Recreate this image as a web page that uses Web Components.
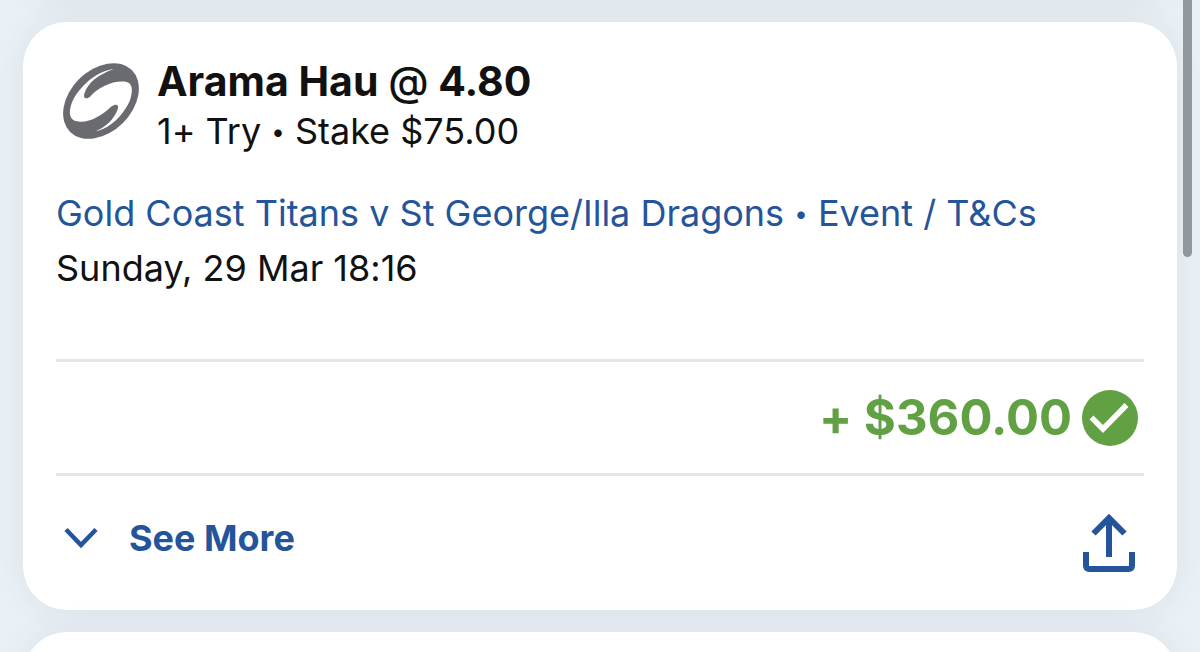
<!DOCTYPE html>
<html lang="en">
<head>
<meta charset="utf-8">
<meta name="viewport" content="width=device-width, initial-scale=1">
<title>My Bets</title>
<style>
  html { height: 100%; }
  body {
    margin: 0;
    height: 100%;
    overflow: hidden;
    background: #eaf1f6;
    color: #111;
    font-family: Inter, "Liberation Sans", sans-serif;
    font-feature-settings: "calt" 0;
  }

  .dot { font-size: 24px; line-height: 1; vertical-align: 4px; }
  .at { font-weight: 500; }
</style>
</head>
<body>

<bet-list>
  <bet-card></bet-card>
  <bet-card>
    <bet-heading slot="heading">
      <span slot="selection">Arama Hau <span class="at">@</span> 4.80</span>
      <span slot="stake">1+ Try <span class="dot">•</span> Stake $75.00</span>
    </bet-heading>
    <bet-event slot="event" href="#event">
      <span slot="match">Gold Coast Titans v St George/Illa Dragons <span class="dot">•</span> Event / T&amp;Cs</span>
      <span slot="time">Sunday, 29 Mar 18:16</span>
    </bet-event>
    <bet-result slot="result">+ $360.00</bet-result>
    <bet-actions slot="actions">See More</bet-actions>
  </bet-card>
  <bet-card></bet-card>
</bet-list>

<script>
// Client side javascript
//----------------------------------------------------------------------------
// Elements for the list of settled bets.
//----------------------------------------------------------------------------

function makeTemplate(html)
{
  let tmpl = document.createElement('template');
  tmpl.innerHTML = html;
  return tmpl;
}

class BetElement extends HTMLElement
{
  constructor() {
    super(); // always call super() first in the ctor.
    let shadowRoot = this.attachShadow({mode: 'open'});
    shadowRoot.appendChild(this.constructor.tmpl.content.cloneNode(true));
  }
}

//----------------------------------------------------------------------------
// The list, with its scroll indicator
//----------------------------------------------------------------------------
class BetList extends BetElement {}
BetList.tmpl = makeTemplate(`
<style>
  :host {
    box-sizing: border-box;
    display: flex;
    flex-direction: column;
    gap: 22px;
    height: 100%;
    padding: 0 23px;
    overflow: hidden;
  }

  /* the list is scrolled just past its first card */
  ::slotted(:first-child) { margin-top: -88px; }

  .thumb {
    position: absolute;
    top: -8px;
    right: 8px;
    width: 9px;
    height: 265px;
    border-radius: 5px;
    background: #92979b;
  }
</style>
<slot></slot>
<div class="thumb"></div>
`);

//----------------------------------------------------------------------------
// White card, sections are divided by a thin rule
//----------------------------------------------------------------------------
class BetCard extends BetElement
{
  connectedCallback() {
    // sections with nothing in them stay hidden
    this.shadowRoot.querySelectorAll('div').forEach(div => {
      let used = [...div.querySelectorAll('slot')].some(
        s => this.querySelector('[slot="' + s.name + '"]'));
      div.classList.toggle('filled', used);
    });
  }
}
BetCard.tmpl = makeTemplate(`
<style>
  :host {
    display: block;
    flex: none;
    min-height: 88px;
    padding: 0 33px;
    border-radius: 44px;
    background: #fff;
    box-shadow: 0 0 32px rgba(50, 50, 80, 0.09);
  }

  div { display: none; }
  .filled { display: block; }
  .top { padding: 35px 0 63px; }
  .result, .actions { border-top: 3px solid #e3e5ec; }
  .result { padding: 27px 6px; }
  .actions { padding: 37px 8px; }
</style>
<div class="top"><slot name="heading"></slot><slot name="event"></slot></div>
<div class="result"><slot name="result"></slot></div>
<div class="actions"><slot name="actions"></slot></div>
`);

//----------------------------------------------------------------------------
// League logo, selection and stake
//----------------------------------------------------------------------------
class BetHeading extends BetElement {}
BetHeading.tmpl = makeTemplate(`
<style>
  :host {
    display: flex;
    align-items: flex-start;
    gap: 18px;
    padding-left: 7px;
  }

  svg { flex: none; width: 76px; height: 76px; margin-top: 6px; }
  h2, p { margin: 0; }
  h2 { font-size: 41px; line-height: 48px; font-weight: 700; }
  p { font-size: 36px; line-height: 52px; }
</style>
<svg viewBox="40 38 228 228" aria-hidden="true">
  <ellipse cx="154" cy="152" rx="131" ry="93" transform="rotate(-45 154 152)" fill="#6a6b70"/>
  <path fill="#fff" d="M192 57 C145 60 90 106 67 156 C56 186 59 206 77 212
    C112 222 152 200 186 168 C200 158 209 164 204 177 C194 206 168 231 138 243
    C180 236 222 194 241 150 C251 118 248 100 231 95 C196 88 148 108 121 139
    C108 149 100 143 104 130 C113 98 150 70 192 57Z"/>
</svg>
<div>
  <h2><slot name="selection"></slot></h2>
  <p><slot name="stake"></slot></p>
</div>
`);

//----------------------------------------------------------------------------
// Link to the event and its start time
//----------------------------------------------------------------------------
class BetEvent extends BetElement
{
  connectedCallback() {
    this.shadowRoot.querySelector('a').href = this.getAttribute('href');
  }
}
BetEvent.tmpl = makeTemplate(`
<style>
  :host {
    display: block;
    margin-top: 29px;
    font-size: 36px;
    line-height: 55px;
  }

  a { display: block; color: #24549a; text-decoration: none; }
</style>
<a><slot name="match"></slot></a>
<slot name="time"></slot>
`);

//----------------------------------------------------------------------------
// Amount returned by a winning bet
//----------------------------------------------------------------------------
class BetResult extends BetElement {}
BetResult.tmpl = makeTemplate(`
<style>
  :host {
    display: flex;
    align-items: center;
    justify-content: flex-end;
    gap: 10px;
    color: #61a144;
    font-size: 49px;
    line-height: 57px;
    font-weight: 700;
  }

  svg { flex: none; width: 56px; height: 56px; }
</style>
<span><slot></slot></span>
<svg viewBox="0 0 56 56" role="img" aria-label="Won">
  <circle cx="28" cy="28" r="28" fill="currentColor"/>
  <path d="M9.500 27.500 L21 39 L44.500 15" fill="none" stroke="#fff" stroke-width="5.500"/>
</svg>
`);

//----------------------------------------------------------------------------
// Expand and share buttons
//----------------------------------------------------------------------------
class BetActions extends BetElement {}
BetActions.tmpl = makeTemplate(`
<style>
  :host {
    display: flex;
    align-items: center;
    justify-content: space-between;
    color: #24549a;
  }

  button {
    display: flex;
    align-items: center;
    padding: 0;
    border: 0;
    background: none;
    color: inherit;
    font: inherit;
    cursor: pointer;
  }

  .more {
    gap: 31px;
    padding-bottom: 10px;
    font-size: 36px;
    line-height: 50px;
    font-weight: 700;
  }

  svg { fill: none; stroke: currentColor; }
</style>
<button class="more" type="button">
  <svg width="34" height="22" viewBox="0 0 34 22" stroke-width="4.500" aria-hidden="true">
    <path d="M2 2.500 L17 18 L32 2.500"/>
  </svg>
  <slot></slot>
</button>
<button class="share" type="button" aria-label="Share">
  <svg width="54" height="60" viewBox="0 0 54 60" stroke-width="6">
    <path d="M27 44 V6 M11.500 20.500 L27 5 L42.500 20.500"/>
    <path d="M4 39 V52.500 Q4 56 7.500 56 H46.500 Q50 56 50 52.500 V39"/>
  </svg>
</button>
`);

customElements.define('bet-list', BetList);
customElements.define('bet-card', BetCard);
customElements.define('bet-heading', BetHeading);
customElements.define('bet-event', BetEvent);
customElements.define('bet-result', BetResult);
customElements.define('bet-actions', BetActions);
</script>
</body>
</html>
